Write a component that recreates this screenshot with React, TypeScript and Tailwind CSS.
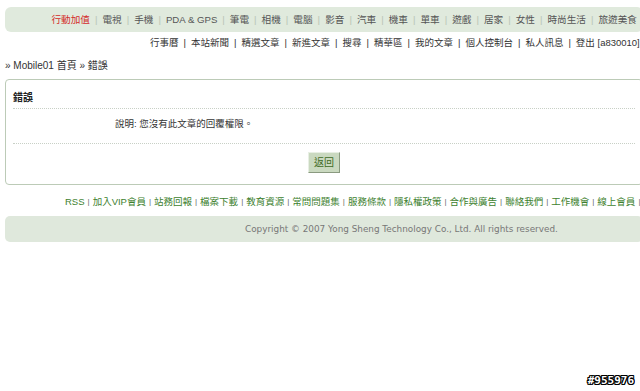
import React from 'react';

const topNav = ['電視', '手機', 'PDA & GPS', '筆電', '相機', '電腦', '影音', '汽車', '機車', '單車', '遊戲', '居家', '女性', '時尚生活', '旅遊美食'];
const userNav = ['行事曆', '本站新聞', '精選文章', '新進文章', '搜尋', '精華區', '我的文章', '個人控制台', '私人訊息', '登出 [a830010]'];
const footerLinks = ['RSS', '加入VIP會員', '站務回報', '檔案下載', '教育資源', '常問問題集', '服務條款', '隱私權政策', '合作與廣告', '聯絡我們', '工作機會', '線上會員', '網站地圖'];

const font = { fontFamily: '"Liberation Sans", "Noto Sans CJK TC", sans-serif' };

export default function App() {
  return (
    <div className="relative w-[640px] h-[391px] overflow-hidden bg-white text-[9.5px] leading-[12px] text-[#333]" style={font}>
      <div className="w-[638px] ml-[5px] pt-[7px]">
        {/* top category bar */}
        <div className="h-[25px] rounded-[6px] bg-[#e0eadd] flex items-center justify-end pr-[6px] whitespace-nowrap text-[9.65px] text-[#555]">
          <span className="text-[#d42a2a]">行動加值</span>
          {topNav.map(item => (
            <React.Fragment key={item}>
              <span className="mx-[5px] text-[#b9c4b6]">|</span>
              <span>{item}</span>
            </React.Fragment>
          ))}
        </div>

        {/* user nav */}
        <div className="h-[22px] flex items-center pl-[145px] whitespace-nowrap text-[#333]">
          {userNav.map((item, i) => (
            <React.Fragment key={item}>
              {i > 0 && <span className="mx-[5px]">|</span>}
              <span>{item}</span>
            </React.Fragment>
          ))}
        </div>

        {/* breadcrumb */}
        <div className="h-[20px] mt-[2px] flex items-center text-[10px] text-[#333]">
          » Mobile01 首頁 » 錯誤
        </div>

        {/* error box */}
        <div className="mt-[3px] border border-[#bccbb7] rounded-[4px] px-[7px] pb-[11px]">
          <div className="h-[28px] flex items-end pb-[4px] font-bold text-[10px] text-[#222]">錯誤</div>
          <div className="border-t border-dotted border-[#c8d0c6]" />
          <div className="h-[34px] flex items-center pb-[4px] pl-[102px] text-[#333]">說明: 您沒有此文章的回覆權限。</div>
          <div className="border-t border-dotted border-[#c8d0c6]" />
          <div className="flex justify-center pt-[8px]">
            <button className="h-[21px] px-[5px] bg-[#cad9c0] border border-t-[#e8efe4] border-l-[#e8efe4] border-r-[#8a9a80] border-b-[#8a9a80] text-[#3f6b1f] text-[10px]" style={font}>
              返回
            </button>
          </div>
        </div>

        {/* footer links */}
        <div className="h-[20px] mt-[7px] flex items-center pl-[60px] whitespace-nowrap text-[#3d7f2e]">
          {footerLinks.map((item, i) => (
            <React.Fragment key={item}>
              {i > 0 && <span className="mx-[3px] text-[8px] text-[#666]">|</span>}
              <span>{item}</span>
            </React.Fragment>
          ))}
        </div>

        {/* copyright */}
        <div
          className="h-[26px] mt-[4px] rounded-[5px] bg-[#dfe8dc] flex items-center pl-[240px] whitespace-nowrap text-[#777] text-[8.85px]"
          style={{ fontFamily: '"DejaVu Sans", sans-serif' }}
        >
          Copyright © 2007 Yong Sheng Technology Co., Ltd. All rights reserved.
        </div>
      </div>

      <div className="absolute right-[6px] bottom-[4px] text-[11px] font-bold text-white leading-[12px] [text-shadow:1px_0_0_#000,-1px_0_0_#000,0_1px_0_#000,0_-1px_0_#000,1px_1px_0_#000,-1px_-1px_0_#000,1px_-1px_0_#000,-1px_1px_0_#000]" style={{ fontFamily: '"DejaVu Sans Mono", monospace' }}>
        #955976
      </div>
    </div>
  );
}
